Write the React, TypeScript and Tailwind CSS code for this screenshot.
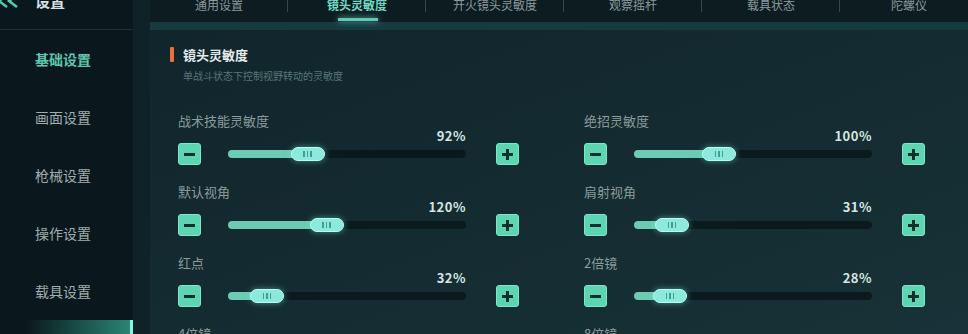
import React from "react";

const tabs = ["通用设置", "镜头灵敏度", "开火镜头灵敏度", "观察摇杆", "载具状态", "陀螺仪"];
const menu = ["基础设置", "画面设置", "枪械设置", "操作设置", "载具设置"];

const rows: [string, number, string, number][] = [
  ["战术技能灵敏度", 92, "绝招灵敏度", 100],
  ["默认视角", 120, "肩射视角", 31],
  ["红点", 32, "2倍镜", 28],
  ["4倍镜", 40, "8倍镜", 40],
];

function Btn({ plus }: { plus?: boolean }) {
  return (
    <div className="relative w-[23px] h-[22px] shrink-0 rounded-[3px] bg-[#5dd5b3] border border-[#7fe6c8] flex items-center justify-center">
      <div className="w-[11px] h-[3px] bg-[#10302c]" />
      {plus && <div className="absolute w-[3px] h-[11px] bg-[#10302c]" />}
    </div>
  );
}

function Slider({ label, value }: { label: string; value: number }) {
  // range 0-300%, thumb 34px on a 238px track
  const frac = Math.min(value / 300, 1);
  const left = frac * (238 - 34);
  return (
    <div className="w-[341px] h-[71px] shrink-0 flex flex-col">
      <div className="h-[16px] text-[13px] leading-[16px] text-[#8a9b9b]">{label}</div>
      <div className="h-[14px] pr-[53px] flex justify-end items-center text-[13px] font-bold text-[#d6e6e2] leading-[14px] tracking-[0.5px]">
        {value}%
      </div>
      <div className="h-[22px] flex items-center">
        <Btn />
        <div className="relative ml-[27px] mr-[30px] w-[238px] h-[8px] rounded-full bg-[#0b1a1d]">
          <div
            className="absolute left-0 top-0 h-[8px] rounded-full bg-[#6ccbb2]"
            style={{ width: left + 17 }}
          />
          <div
            className="absolute top-[-3px] w-[34px] h-[14px] rounded-full bg-[#8ce9dc] border border-[#b4fff4] shadow-[0_0_6px_rgba(120,240,220,0.5)] flex items-center justify-center gap-[2px]"
            style={{ left }}
          >
            <div className="w-[1.5px] h-[6px] bg-[#3c9f94]" />
            <div className="w-[1.5px] h-[6px] bg-[#3c9f94]" />
            <div className="w-[1.5px] h-[6px] bg-[#3c9f94]" />
          </div>
        </div>
        <Btn plus />
      </div>
    </div>
  );
}

export default function App() {
  return (
    <div
      className="w-[968px] h-[334px] overflow-hidden flex bg-[#0b181d]"
      style={{ fontFamily: '"Noto Sans CJK SC", "Noto Sans", sans-serif' }}
    >
      {/* Sidebar */}
      <div className="w-[133px] shrink-0 flex flex-col bg-[#0a171c] overflow-hidden">
        <div className="h-[30px] shrink-0 border-b border-[#1d3035] flex items-start">
          <svg width="26" height="14" viewBox="0 0 26 14" className="-mt-[6px] ml-[-4px] shrink-0">
            <path d="M11 1 L3 7 L11 13" stroke="#4ccfb3" strokeWidth="2.5" fill="none" />
            <path d="M21 1 L13 7 L21 13" stroke="#4ccfb3" strokeWidth="2.5" fill="none" />
          </svg>
          <span className="ml-[13px] -mt-[10px] text-[15px] font-bold text-[#d8e2e2]">设置</span>
        </div>
        {menu.map((m, i) => (
          <div
            key={m}
            className={`h-[58px] shrink-0 flex items-center pl-[35px] text-[14px] ${
              i === 0 ? "text-[#5fc8ae] font-bold" : "text-[#a0aeae]"
            }`}
          >
            {m}
          </div>
        ))}
        <div className="h-[58px] shrink-0 flex">
          <div className="flex-1 ml-[25px] bg-gradient-to-r from-transparent to-[#2a8474]" />
          <div className="w-[3px] bg-[#86f2e2]" />
        </div>
      </div>

      {/* divider strip */}
      <div className="w-[17px] shrink-0 bg-[#0f2227]" />

      {/* Main */}
      <div className="flex-1 flex flex-col min-w-0">
        <div className="h-[22px] shrink-0 flex bg-[#0d1c21]">
          {tabs.map((t, i) => (
            <div key={t} className="relative w-[138px] shrink-0 flex justify-center">
              <span
                className={`-mt-[4px] text-[12px] leading-[18px] ${
                  i === 1 ? "text-[#6fd9c2] font-bold" : "text-[#8a9a9c]"
                }`}
              >
                {t}
              </span>
              {i === 1 && (
                <div className="absolute bottom-[1px] left-[50px] w-[40px] h-[3px] bg-[#5fcbb6] shadow-[0_0_6px_#5fcbb6]" />
              )}
              {i < tabs.length - 1 && (
                <div className="absolute right-0 top-0 w-[1px] h-[12px] bg-[#34474b]" />
              )}
            </div>
          ))}
        </div>
        <div className="h-[8px] shrink-0 bg-[#173a41]" />
        <div className="flex-1 min-h-0 bg-gradient-to-br from-[#11262c] via-[#142b31] to-[#173238] pl-[20px] pt-[17px]">
          <div className="flex items-center h-[15px]">
            <div className="w-[4px] h-[15px] rounded-[1px] bg-[#e8703a]" />
            <span className="ml-[9px] text-[13px] font-bold text-[#e4ecec] leading-[15px]">镜头灵敏度</span>
          </div>
          <div className="ml-[13px] mt-[8px] text-[10px] leading-[12px] text-[#5b7678]">
            单战斗状态下控制视野转动的灵敏度
          </div>
          <div className="mt-[31px] ml-[8px] flex flex-col">
            {rows.map(([l1, v1, l2, v2]) => (
              <div key={l1} className="flex gap-[65px] shrink-0">
                <Slider label={l1} value={v1} />
                <Slider label={l2} value={v2} />
              </div>
            ))}
          </div>
        </div>
      </div>
    </div>
  );
}
